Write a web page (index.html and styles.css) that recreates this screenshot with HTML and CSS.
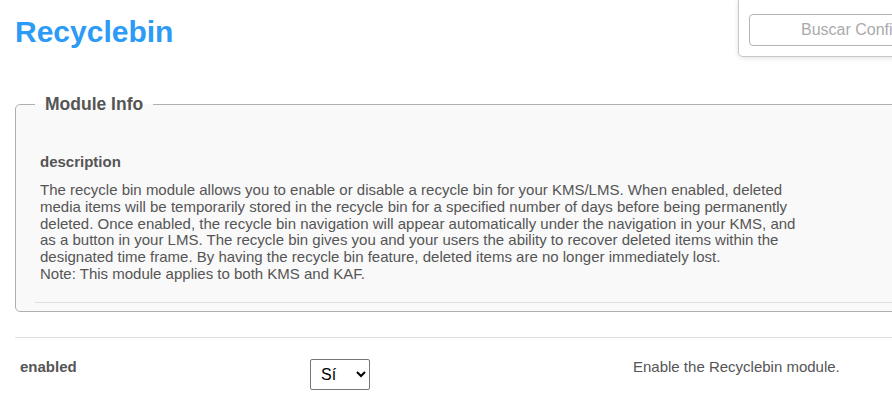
FILE: index.html
```html
<!DOCTYPE html>
<html lang="es">
<head>
  <meta charset="UTF-8">
  <title>Recyclebin</title>
  <link rel="stylesheet" href="styles.css">
</head>
<body>
<div class="search-panel">
  <input type="text" class="search-input" placeholder="Buscar Configuración">
</div>

<div class="page">
  <h1 class="title">Recyclebin</h1>

  <fieldset class="module-info">
    <legend>Module Info</legend>
    <div class="info-body">
      <div class="info-label">description</div>
      <p class="info-text">The recycle bin module allows you to enable or disable a recycle bin for your KMS/LMS. When enabled, deleted media items will be temporarily stored in the recycle bin for a specified number of days before being permanently deleted. Once enabled, the recycle bin navigation will appear automatically under the navigation in your KMS, and as a button in your LMS. The recycle bin gives you and your users the ability to recover deleted items within the designated time frame. By having the recycle bin feature, deleted items are no longer immediately lost.<br>Note: This module applies to both KMS and KAF.</p>
    </div>
  </fieldset>

  <div class="setting-row">
    <div class="setting-name">enabled</div>
    <div class="setting-value">
      <select class="setting-select">
        <option>Sí</option>
        <option>No</option>
      </select>
    </div>
    <div class="setting-help">Enable the Recyclebin module.</div>
  </div>
</div>
</body>
</html>
```

FILE: styles.css
```css
html, body {
  overflow: hidden;
}
body {
  margin: 0;
  font-family: "Liberation Sans", Arial, sans-serif;
  color: #555;
  background: #fff;
}
.page {
  padding: 0 0 0 15px;
  width: 1000px;
}
.title {
  margin: 0;
  padding-top: 14px;
  font-size: 30px;
  font-weight: bold;
  color: #2b9bf7;
  line-height: 36px;
}
.search-panel {
  position: absolute;
  top: 0;
  left: 738px;
  width: 300px;
  height: 57px;
  padding: 14px 0 0 10px;
  box-sizing: border-box;
  border: 1px solid #c8c8c8;
  border-top: none;
  border-radius: 0 0 0 5px;
  background: #fff;
  box-shadow: 0 1px 5px rgba(0,0,0,0.12);
}
.search-input {
  display: block;
  width: 260px;
  height: 32px;
  box-sizing: border-box;
  border: 1px solid #b4b4b4;
  border-radius: 4px;
  padding: 0 0 0 51px;
  font-family: "Liberation Sans", Arial, sans-serif;
  font-size: 16px;
}
.search-input::placeholder {
  color: #aaa;
}
.module-info {
  margin: 44px 0 0 0;
  padding: 0 0 8px 19px;
  border: 1px solid #b0b0b0;
  border-radius: 5px;
  background: #f9f9f9;
}
.module-info legend {
  margin-left: 0;
  padding: 0 10px;
  font-size: 17.5px;
  font-weight: bold;
  color: #555;
}
.info-body {
  padding: 39px 0 8px 5px;
  border-bottom: 1px solid #dedede;
}
.info-label {
  font-size: 15px;
  font-weight: bold;
  line-height: 16px;
}
.info-text {
  margin: 12px 0 0 0;
  width: 772px;
  font-size: 15px;
  line-height: 16.8px;
  padding-bottom: 11px;
}
.setting-row {
  display: flex;
  margin-top: 25px;
  border-top: 1px solid #e0e0e0;
  padding-top: 21px;
}
.setting-name {
  width: 295px;
  box-sizing: border-box;
  padding-left: 5px;
  font-size: 15px;
  font-weight: bold;
  line-height: 16px;
}
.setting-value {
  width: 323px;
}
.setting-select {
  width: 60px;
  height: 31px;
  border: 1px solid #767676;
  border-radius: 2px;
  font-family: "Liberation Sans", Arial, sans-serif;
  font-size: 16px;
  color: #000;
  background: #fff;
  padding-left: 6px;
}
.setting-help {
  font-size: 15px;
  line-height: 16px;
}
```
